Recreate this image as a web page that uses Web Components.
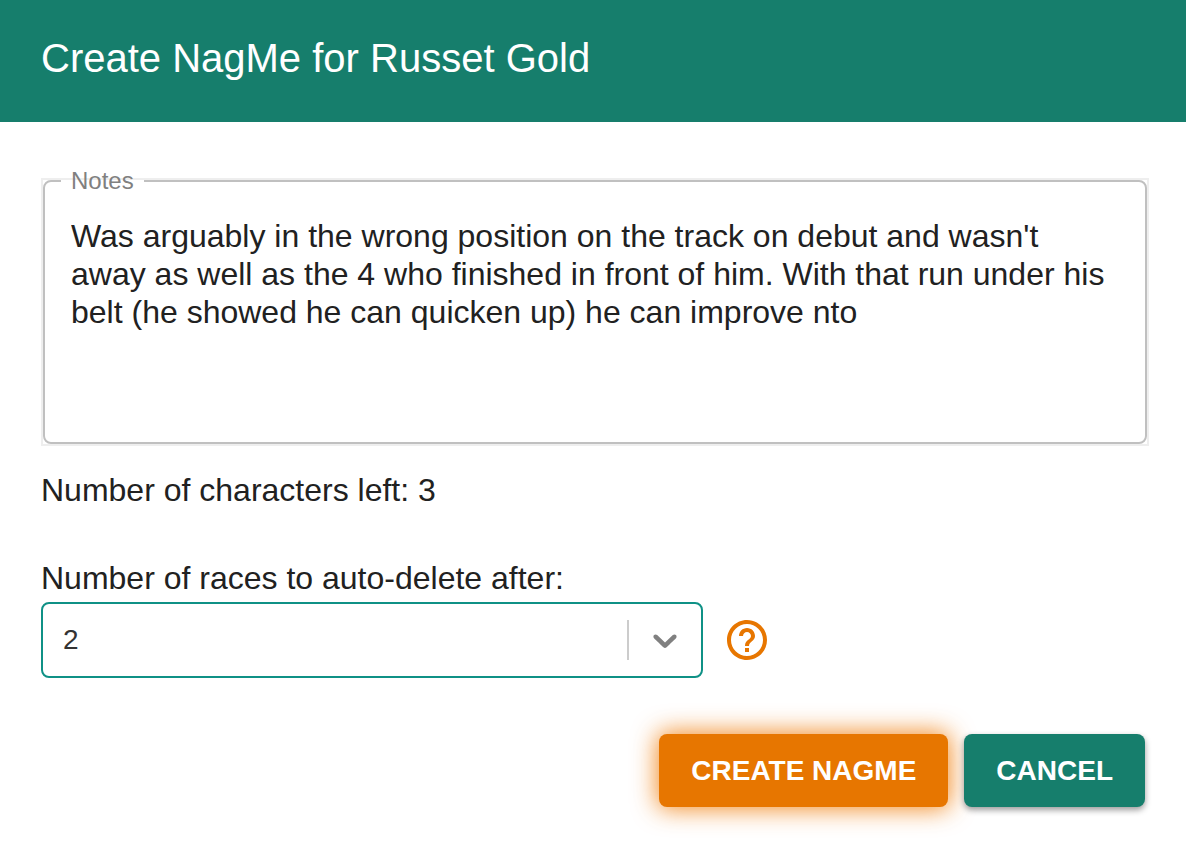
<!DOCTYPE html>
<html lang="en">
<head>
<meta charset="utf-8">
<meta name="viewport" content="width=device-width, initial-scale=1">
<title>Create NagMe</title>
<style>
  body { margin: 0; background: #fff; color: #212121; font: 32px/48px "Liberation Sans", Arial, sans-serif; }
</style>
</head>
<body>
<nag-dialog>
  <span slot="title">Create NagMe for Russet Gold</span>
  <notes-field limit="200" label="Notes">Was arguably in the wrong position on the track on debut and wasn't away as well as the 4 who finished in front of him. With that run under his belt (he showed he can quicken up) he can improve nto</notes-field>
  <race-select label="Number of races to auto-delete after:" value="2"></race-select>
  <nag-button slot="actions" variant="primary">Create NagMe</nag-button>
  <nag-button slot="actions">Cancel</nag-button>
</nag-dialog>

<script>
class BaseElement extends HTMLElement {
  render(html) {
    this.attachShadow({ mode: "open" }).innerHTML = html;
    return this.shadowRoot;
  }
}

customElements.define("nag-dialog", class extends BaseElement {
  connectedCallback() {
    this.render(`
      <style>
        :host { display: block; }
        header { background: #167e6c; color: #fff; padding: 34px 41px 40px; }
        h1 { margin: 0; font-size: 40px; line-height: 48px; font-weight: 400; }
        main { display: flex; flex-direction: column; gap: 40px; padding: 56px 37px 0 41px; }
        footer { display: flex; justify-content: flex-end; gap: 16px; padding: 56px 41px 40px; }
      </style>
      <header><h1><slot name="title"></slot></h1></header>
      <main><slot></slot></main>
      <footer><slot name="actions"></slot></footer>`);
  }
});

customElements.define("notes-field", class extends BaseElement {
  connectedCallback() {
    const root = this.render(`
      <style>
        :host { display: block; }
        .frame { border: 2px solid #eee; margin-bottom: 20px; }
        fieldset { margin: -11px 0 0; padding: 24px 26px 35px; border: 2px solid #c0c0c0; border-radius: 8px; min-width: 0; }
        legend { margin-left: -10px; padding: 0 10px; font-size: 24px; line-height: 24px; color: #808080; }
        textarea { display: block; box-sizing: border-box; width: 100%; height: 190px; margin: 0; padding: 0; border: 0;
          outline: 0; resize: none; overflow: hidden; background: none; color: inherit; font: inherit; line-height: 38px; }
        p { margin: 0; }
      </style>
      <div class="frame">
        <fieldset>
          <legend><label for="notes"></label></legend>
          <textarea id="notes"></textarea>
        </fieldset>
      </div>
      <p>Number of characters left: <output for="notes"></output></p>`);
    const limit = Number(this.getAttribute("limit"));
    const area = root.querySelector("textarea");
    const left = root.querySelector("output");
    root.querySelector("label").textContent = this.getAttribute("label");
    area.maxLength = limit;
    area.value = this.textContent.trim();
    const update = () => { left.textContent = limit - area.value.length; };
    area.addEventListener("input", update);
    update();
  }
});

customElements.define("race-select", class extends BaseElement {
  connectedCallback() {
    const root = this.render(`
      <style>
        :host { display: block; }
        label { display: block; }
        .row { display: flex; align-items: center; gap: 20px; }
        .box { display: grid; flex: 0 1 662px; min-width: 0; }
        select, .indicator { grid-area: 1 / 1; }
        select { appearance: none; box-sizing: border-box; width: 100%; height: 76px; margin: 0; padding: 0 90px 2px 20px;
          border: 2px solid #0f9186; border-radius: 8px; outline: 0; background: #fff; color: #333;
          font-family: inherit; font-size: 28px; }
        .indicator { display: flex; align-items: center; justify-self: end; align-self: center; gap: 16px; margin-right: 18px; pointer-events: none; }
        .separator { width: 2px; height: 40px; background: #ccc; }
        .indicator svg { width: 40px; height: 40px; fill: #808080; }
        button { flex: none; display: flex; padding: 0; border: 0; background: none; color: #e77600; }
        button svg { width: 48px; height: 48px; fill: currentColor; }
      </style>
      <label for="races"></label>
      <div class="row">
        <div class="box">
          <select id="races"><option>1</option><option>2</option><option>3</option><option>4</option><option>5</option></select>
          <span class="indicator">
            <span class="separator"></span>
            <svg viewBox="0 0 20 20" aria-hidden="true"><path d="M4.516 7.548c0.436-0.446 1.043-0.481 1.576 0l3.908 3.747 3.908-3.747c0.533-0.481 1.141-0.446 1.574 0 0.436 0.445 0.408 1.197 0 1.615-0.406 0.418-4.695 4.502-4.695 4.502-0.217 0.223-0.502 0.335-0.787 0.335s-0.57-0.112-0.789-0.335c0 0-4.287-4.084-4.695-4.502s-0.436-1.17 0-1.615z"/></svg>
          </span>
        </div>
        <button type="button" aria-label="Help">
          <svg viewBox="0 0 24 24" aria-hidden="true"><path d="M11 18h2v-2h-2v2zm1-16C6.480 2 2 6.480 2 12s4.480 10 10 10 10-4.480 10-10S17.520 2 12 2zm0 18c-4.410 0-8-3.590-8-8s3.590-8 8-8 8 3.590 8 8-3.590 8-8 8zm0-14c-2.210 0-4 1.790-4 4h2c0-1.100.9-2 2-2s2 .9 2 2c0 2-3 1.750-3 5h2c0-2.250 3-2.500 3-5 0-2.210-1.790-4-4-4z"/></svg>
        </button>
      </div>`);
    root.querySelector("label").textContent = this.getAttribute("label");
    root.querySelector("select").value = this.getAttribute("value");
  }
});

customElements.define("nag-button", class extends BaseElement {
  connectedCallback() {
    this.render(`
      <style>
        :host { display: block; }
        button { display: block; padding: 12px 32px; border: 0; border-radius: 8px; background: #167e6c; color: #fff;
          font-family: inherit; font-size: 28px; line-height: 49px; font-weight: 700; text-transform: uppercase; white-space: nowrap;
          box-shadow: 0 3px 6px rgba(0, 0, 0, .4); }
        :host([variant="primary"]) button { background: #e77600; box-shadow: 0 0 24px 2px rgba(240, 120, 0, .85); }
      </style>
      <button type="button"><slot></slot></button>`);
  }
});
</script>
</body>
</html>
